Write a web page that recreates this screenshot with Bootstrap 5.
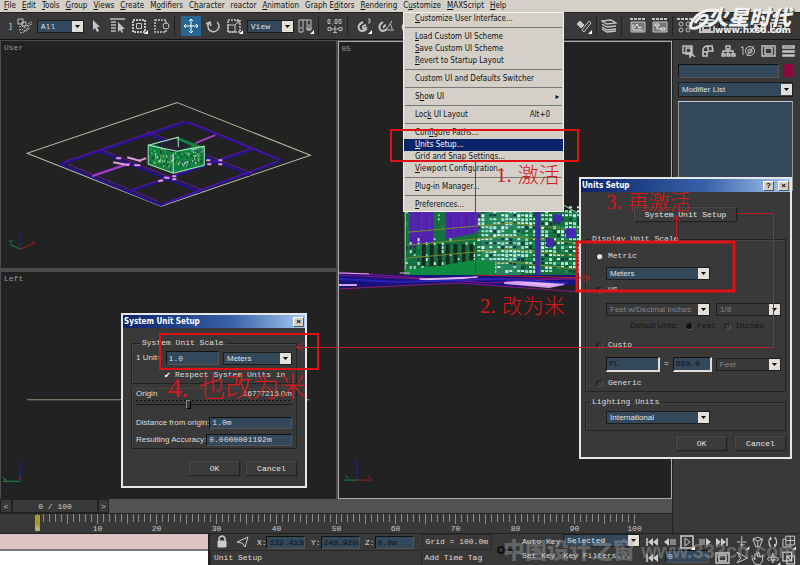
<!DOCTYPE html>
<html lang="en">
<head>
<meta charset="utf-8">
<meta name="viewport" content="width=device-width, initial-scale=1">
<title>Units Setup</title>
<link href="https://cdn.jsdelivr.net/npm/bootstrap@5.3.0/dist/css/bootstrap.min.css" rel="stylesheet">
<style>
:root{--ui:"DejaVu Sans Condensed","DejaVu Sans",sans-serif;--mono:"Liberation Mono","Noto Sans CJK SC",monospace;--arial:"Liberation Sans",Arial,sans-serif;--blue:#34485c;--panel:#393939;--dark:#222}
body{background:var(--panel);color:#ddd;font:8px/12px var(--mono);overflow:hidden}
button,input,select{font:inherit;color:inherit;border-radius:0;padding:0;margin:0}
svg{display:block}
.menubar{background:#d4d0c8;height:12px;font-family:var(--ui);gap:6px;padding-left:4px}
.menubar button,.menu-item{background:none;border:0;color:#111;line-height:12px;white-space:nowrap}
.toolbar-main{height:28px;gap:2px;border-top:1px solid #222;border-bottom:1px solid #111;padding:0 12px 0 8px}
.tool{width:20px;height:20px;background:none;border:0;color:#c4c4c4;display:flex;align-items:center;justify-content:center;flex:none}
.tool svg,.ico svg{width:16px;height:16px;fill:none;stroke:currentColor}
.ico{color:#ccc}
.flip{transform:scaleX(-1)}
.tool.on{background:#266794;color:#fff}
.vr-dark{width:1px;height:20px;background:#222;flex:none}
.pick{appearance:none;border:1px solid #1c1c1c;background:var(--blue) url("data:image/svg+xml,%3Csvg xmlns='http://www.w3.org/2000/svg' width='11' height='11'%3E%3Cpath fill='%23e4e0d8' d='M0 0h11v11H0z'/%3E%3Cpath d='M3 4h5L5.5 7z'/%3E%3C/svg%3E") no-repeat right center;color:#dde4ea;padding-left:3px;height:13px;line-height:11px;font-family:var(--arial);flex:none}
.pick:disabled{background-color:var(--panel);color:#858585;opacity:1}
.pick.mono{font-family:var(--mono)}
.toolbar-main .pick{width:47px;font-family:var(--mono)}
.viewports{display:grid;grid-template-columns:1fr 1fr;grid-template-rows:227fr 228fr;gap:4px 2px;background:#4c4c4c;padding:1px 0 0 1px}
.view{background:var(--dark);position:relative;overflow:hidden;min-height:0;min-width:0}
.view svg{width:100%;height:100%;position:absolute;inset:0}
.view-name{position:absolute;left:3px;top:1px;color:#999}
.view.camera{grid-row:1/3;grid-column:2;border:1px solid #aaa}
.side{width:128px;border-left:1px solid #222;padding:2px 7px 2px 5px;flex:none}
.side .tool{height:18px}
.field{background:var(--blue);border:1px solid #111;border-right-color:#555;border-bottom-color:#555;min-width:0;padding-left:2px}
.swatch{width:11px;height:13px;background:#8b0a3e;border:0}
.stack{height:90px;border:1px solid #999;border-top-color:#ccc;background:var(--blue)}
.slider-row{height:14px;background:#525252}
.slider-row button{background:var(--panel);border:1px solid #222;color:#ccc;line-height:11px}
.ruler{height:20px;border-top:1px solid #222}
.status{height:32px;border-top:1px solid #222}
.status .field{width:39px;height:13px;color:#111}
.status .frame{width:44px;color:#ddd}
.listener{width:210px;flex:none;border-right:2px solid #222}
.cell{border:1px solid #292929;height:16px;line-height:14px;padding:0 3px;white-space:nowrap}
.flat{background:none;border:0;color:#ddd;text-align:left;white-space:nowrap}
.menu-pop{position:absolute;left:403px;top:12px;width:161px;background:#d4d0c8;border:1px solid #f3f1ec;font-family:var(--ui);z-index:3}
.menu-item{display:flex;justify-content:space-between;width:100%;padding:0 13px 0 11px;text-align:left}
.menu-item.on{background:#0a246a;color:#fff}
.menu-pop hr{margin:2px 1px 3px;border-top:1px solid #777;opacity:1}
.win{position:absolute;background:var(--panel);border:2px solid #e6e6e6;z-index:4}
.units{left:579px;top:177px;width:213px}
.sysunit{left:121px;top:313px;width:186px}
.win-title{height:13px;background:linear-gradient(90deg,#0a246a,#3a62a8 60%,#a6caf0);font:bold 8px/13px var(--ui);color:#fff;padding:0 1px 0 1px}
.win-title button{width:11px;height:10px;background:#d4d0c8;border:1px solid #555;border-top-color:#fff;border-left-color:#fff;color:#000;font:bold 8px/8px var(--arial)}
.group-box{border:1px solid #232323;box-shadow:inset 1px 1px #444;padding:6px 8px 2px 12px;margin:0;min-width:0}
.group-box legend{float:none;width:auto;font:8px/10px var(--mono);padding:0 2px;margin:0 0 0 -8px;color:#ddd}
.group-box.lights{padding-top:4px;padding-bottom:7px}
.line{display:flex;align-items:center;height:12px;white-space:nowrap}
.t4{margin-top:5px}.t7{margin-top:7px}
.g6{gap:6px}
.wide{width:104px}.narrow{width:65px}
.arial{font-family:var(--arial)}
.off{color:#151515}
.radio{appearance:none;width:7px;height:7px;border-radius:50%;border:1px solid #1c1c1c;border-right-color:#555;border-bottom-color:#555;margin:0 5px 0 -10px;flex:none}
.radio.in{margin:0 4px 0 0}
.radio:checked{background:#eee}
.radio:disabled:checked{background:#111}
.push{background:#3b3b3b;border:1px solid #222;border-top-color:#4a4a4a;border-left-color:#4a4a4a;box-shadow:0 0 0 1px #333;color:#e4e4e4;height:15px;width:51px;line-height:12px}
.push.long{width:103px}
.field.lit{border:1px solid #111;border-right:2px solid #ddd;border-bottom:2px solid #ddd;height:15px;color:#111;flex:none}
.tick{appearance:none;width:7px;height:7px;position:relative}
.tick::after{content:"✔";font:8px/7px "DejaVu Sans",sans-serif;color:#fff;display:block}
.range{appearance:none;background:repeating-linear-gradient(90deg,#111 0 2px,transparent 2px 4px) 0 0/100% 1px no-repeat,linear-gradient(#171717,#171717) 0 4px/100% 1px no-repeat;height:9px;width:100%;display:block}
.range::-webkit-slider-thumb{appearance:none;width:5px;height:9px;background:#3a3a3a;border:1px solid #888;border-right-color:#000;border-bottom-color:#000}
.marks{position:absolute;left:0;top:0;z-index:5;pointer-events:none}
.note{position:absolute;z-index:6;display:flex;gap:6px;color:#d3191c;font:300 21px/24px "Liberation Serif","Noto Sans CJK SC",serif;pointer-events:none;white-space:nowrap}
.note.big{font-size:27px;gap:10px}
.n1{left:496px;top:163px}.n2{left:480px;top:294px}.n3{left:606px;top:190px}.n4{left:168px;top:376px}
.brand{position:absolute;z-index:6;right:9px;top:9px;color:#f2f2f2;font:italic 900 21px/18px "Liberation Sans","Noto Sans CJK SC",sans-serif;text-align:right;pointer-events:none;text-shadow:1px 1px 1px #333}
.brand span{display:block;font:bold 9px/6px "DejaVu Sans",sans-serif}
.brand svg{position:absolute;left:-20px;top:-1px}
.watermark{position:absolute;z-index:6;right:4px;bottom:2px;color:#aaa;opacity:.4;font:900 22px/24px "Liberation Sans","Noto Sans CJK SC",sans-serif;pointer-events:none;white-space:nowrap}
.watermark small{font-size:20px;font-weight:700}
</style>
<script src="https://cdn.jsdelivr.net/npm/bootstrap@5.3.0/dist/js/bootstrap.bundle.min.js"></script>
</head>
<body class="vh-100 d-flex flex-column position-relative">

<svg width="0" height="0" class="position-absolute">
<symbol id="i-link" viewBox="0 0 16 16"><path d="M1 1h5v5H1zM5 4h4v4H5z"/><path d="M2 9l3-1 2 2 3-2 2-3 3-1M2 12l3-1 2 2 4-3 1-3 3-1M3 15l4-1 4-2 2-3" stroke-dasharray="2 1"/></symbol>
<symbol id="i-arrow" viewBox="0 0 16 16"><path d="M5 2v10l2-2 2 4 2-1-2-4h3z" fill="currentColor" stroke="none"/></symbol>
<symbol id="i-byname" viewBox="0 0 16 16"><path d="M0 1h15M1 4h5M1 7h5M1 10h5M1 13h5" stroke-width="2" stroke-opacity=".7"/><path d="M8 4v10l2-2 2 3 1-1-1-3h3z" fill="currentColor" stroke="none"/></symbol>
<symbol id="i-rect" viewBox="0 0 16 16"><path d="M1 2h12v12H1z" stroke-width="2" stroke-dasharray="2 1"/><path d="M4.500 5.500h5v5h-5z"/><path d="M16 12v4h-4z" fill="#fff" stroke="none"/></symbol>
<symbol id="i-window" viewBox="0 0 16 16"><path d="M1 2h11v12H1z" stroke-width="1.5" stroke-dasharray="2 1"/><circle cx="12" cy="8" r="3" fill="#393939"/></symbol>
<symbol id="i-move" viewBox="0 0 16 16"><path d="M8 1v14M1 8h14M6 3l2-2 2 2M6 13l2 2 2-2M3 6L1 8l2 2M13 6l2 2-2 2"/></symbol>
<symbol id="i-rotate" viewBox="0 0 16 16"><path d="M4 5a5.500 5.500 0 1 0 8-1M1 6l4-2 1 4" stroke-width="1.500"/></symbol>
<symbol id="i-scale" viewBox="0 0 16 16"><path d="M1 2h12v12H1z" stroke-dasharray="2 1" stroke-width="1.500"/><path d="M1 7h7v7H1zM8 7l4-4M9 3h3v3"/><path d="M16 12v4h-4z" fill="#fff" stroke="none"/></symbol>
<symbol id="i-pivot" viewBox="0 0 16 16"><path d="M1 2h4v12H1zM9 2h4v10H9zM5 2h4"/><path d="M11 6v6M9 10l2 2 2-2M2 10h2"/><path d="M16 12v4h-4z" fill="#fff" stroke="none"/></symbol>
<symbol id="i-spin" viewBox="0 0 16 16"><path d="M1 1.500h2v4H1zM5 6h1M8 1.500h2v4H8zM12 1.500h2v4h-2zM1 9.500h3v3H1zM4 11h8M12 9.500h3v3h-3zM8 8v6M6 14.500h4" stroke-width=".9"/></symbol>
<symbol id="i-magnet" viewBox="0 0 16 16"><path d="M7 4Q1 7 3 11t8 0M10 7q-4 1-3 3t4-1" stroke-width="2"/><path d="M12 1h2v4h-2M12 3h2" stroke-width=".8"/><path d="M16 12v4h-4z" fill="#fff" stroke="none"/></symbol>
<symbol id="i-angle" viewBox="0 0 16 16"><path d="M5 4Q0 7 2 11t7 0M8 7q-3 1-2 3" stroke-width="2"/><path d="M8 12l6-9M9 12h7M12 6q2 2 2 5"/></symbol>
<symbol id="i-erase" viewBox="0 0 16 16"><path d="M1 6l3-3 4 4-3 3z" fill="currentColor"/><path d="M6 12l7-9 2 2-7 9z"/><path d="M16 12v4h-4z" fill="#fff" stroke="none"/></symbol>
<symbol id="i-layers" viewBox="0 0 16 16"><path d="M1 3l9-1 5 3-9 1zM1 6l5 3 9-1M1 9l5 3 9-1M1 11l5 3 9-1" stroke-width="1.400"/></symbol>
<symbol id="i-curve" viewBox="0 0 16 16"><path d="M0 1h16" stroke-width="2" stroke-dasharray="3 1"/><path d="M1 4h14v10H1z" fill="#777"/><path d="M3 6v6h10M4 10l3-4 2 4 3-1" stroke="#eee"/></symbol>
<symbol id="i-schem" viewBox="0 0 16 16"><path d="M0 1h16" stroke-width="2" stroke-dasharray="3 1"/><path d="M1 4h14v10H1z" fill="#777"/><path d="M3 6h4v2H3zM9 10h4v2H9zM5 8v3h4" stroke="#eee"/></symbol>
<symbol id="i-mat" viewBox="0 0 16 16"><path d="M0 1h16" stroke-width="2" stroke-dasharray="3 1"/><circle cx="4" cy="6" r="2"/><circle cx="11" cy="6" r="2"/><circle cx="4" cy="12" r="2"/><circle cx="11" cy="12" r="2"/></symbol>
<symbol id="i-render" viewBox="0 0 16 16"><path d="M1 2h14M1 5h14v9H1zM4 8h7v4H4z" stroke-width="2"/></symbol>
<symbol id="t-create" viewBox="0 0 16 16"><path d="M3 3h9v7H3zM6 5h5v6H6zM10 9l5 5M10 9v5l2-2" stroke-width="1.400"/></symbol>
<symbol id="t-modify" viewBox="0 0 16 16"><path d="M3 13V8q0-5 5-5h4l1 5H9q-2 0-2 2v3zM8 3v4M3 9h4" stroke-width="1.600"/></symbol>
<symbol id="t-hier" viewBox="0 0 16 16"><path d="M6 3h4v3H6zM2 11h3v2H2zM7 11h3v2H7zM12 11h3v2h-3zM8 6v5M3 11V8h10v3" stroke-width="1.400"/></symbol>
<symbol id="t-motion" viewBox="0 0 16 16"><circle cx="10" cy="8" r="4.500"/><circle cx="10" cy="8" r="2"/><path d="M14 3L7 13M3 4v8M1 5l2-2"/></symbol>
<symbol id="t-display" viewBox="0 0 16 16"><path d="M2 3h13v10H2zM5 5h7v6H5z" stroke-width="1.400"/></symbol>
<symbol id="t-util" viewBox="0 0 16 16"><path d="M3 3h11v2H3zM3 8h11v1H3zM3 12h11v1H3z" stroke-width="1.600"/></symbol>
<symbol id="p-start" viewBox="0 0 16 16"><path d="M3 4v8" stroke-width="1.500"/><path d="M9 4v8L4 8zM14 4v8L9 8z" fill="currentColor" stroke="none"/></symbol>
<symbol id="p-prev" viewBox="0 0 16 16"><path d="M7 4v8L2 8z" fill="currentColor" stroke="none"/><path d="M9 5v6M11 5v6M13 5v6"/></symbol>
<symbol id="p-play" viewBox="0 0 16 16"><path d="M2 2h12v12H2z" stroke-width="1.500"/><path d="M6 4v8l5-4z"/><path d="M16 12v4h-4z" fill="#fff" stroke="none"/></symbol>
<symbol id="n-a" viewBox="0 0 16 16"><path d="M8 2v5M3 8h10M8 9v5M6 11h5"/><path d="M16 12v4h-4z" fill="#fff" stroke="none"/></symbol>
<symbol id="n-b" viewBox="0 0 16 16"><path d="M3 5l5-2 5 2-5 2zM3 5l3 8h4l3-8M8 7v6"/></symbol>
<symbol id="n-c" viewBox="0 0 16 16"><path d="M6 3Q2 8 6 13M10 3q4 5 0 10M6 3v3M10 13v-3" stroke-width="1.300"/></symbol>
<symbol id="n-d" viewBox="0 0 16 16"><path d="M5 2h9v9H5zM9.500 2v9M5 6.500h9M5 5H2v8h8v-2"/><path d="M16 12v4h-4z" fill="#fff" stroke="none"/></symbol>
<symbol id="n-e" viewBox="0 0 16 16"><path d="M3 2l11 6-11 5M3 2l4 6-4 5"/></symbol>
<symbol id="n-f" viewBox="0 0 16 16"><path d="M5 14L2 9l2-1 1 2V4l2-1 1 4V2l2 1v4l3-2v6l-3 4z"/></symbol>
<symbol id="n-g" viewBox="0 0 16 16"><path d="M4 11Q0 7 8 7t5 4M8 3q-3 5 0 10 3-5 0-10M5 10h7"/><path d="M16 12v4h-4z" fill="#fff" stroke="none"/></symbol>
<symbol id="n-h" viewBox="0 0 16 16"><path d="M2 2h9v9H2zM6 6h8v8H6zM6 6l5 5M8 11h3V8" stroke-width="1.300"/></symbol>
</svg>

<nav class="menubar d-flex flex-shrink-0" aria-label="Main menu">
<button><u>F</u>ile</button><button><u>E</u>dit</button><button><u>T</u>ools</button><button><u>G</u>roup</button><button><u>V</u>iews</button><button><u>C</u>reate</button><button>M<u>o</u>difiers</button><button>C<u>h</u>aracter</button><button>reactor</button><button><u>A</u>nimation</button><button>Graph E<u>d</u>itors</button><button><u>R</u>endering</button><button aria-expanded="true">C<u>u</u>stomize</button><button><u>M</u>AXScript</button><button><u>H</u>elp</button>
</nav>

<div class="toolbar-main d-flex align-items-center flex-shrink-0" role="toolbar" aria-label="Main toolbar">
<span>]</span>
<button class="tool" aria-label="Bind"><svg><use href="#i-link"/></svg></button>
<select class="pick" aria-label="Selection filter"><option>All</option></select>
<button class="tool" aria-label="Select"><svg><use href="#i-arrow"/></svg></button>
<button class="tool" aria-label="Select by name"><svg><use href="#i-byname"/></svg></button>
<button class="tool" aria-label="Region"><svg><use href="#i-rect"/></svg></button>
<button class="tool" aria-label="Crossing"><svg><use href="#i-window"/></svg></button>
<span class="vr-dark me-1"></span>
<button class="tool on" aria-label="Move"><svg><use href="#i-move"/></svg></button>
<button class="tool" aria-label="Rotate"><svg><use href="#i-rotate"/></svg></button>
<button class="tool" aria-label="Scale"><svg><use href="#i-scale"/></svg></button>
<select class="pick" aria-label="Coordinate system"><option>View</option></select>
<button class="tool" aria-label="Pivot"><svg><use href="#i-pivot"/></svg></button>
<span class="vr-dark me-1"></span>
<button class="tool" aria-label="Manipulate"><svg><use href="#i-spin"/></svg></button>
<span class="vr-dark me-1"></span>
<button class="tool" aria-label="Snap"><svg><use href="#i-magnet"/></svg></button>
<button class="tool" aria-label="Angle snap"><svg><use href="#i-angle"/></svg></button>
<button class="tool" aria-label="Percent snap"><svg><use href="#i-magnet"/></svg></button>
<button class="tool ms-auto" aria-label="Align"><svg><use href="#i-erase"/></svg></button>
<span class="vr-dark"></span>
<button class="tool" aria-label="Layers"><svg><use href="#i-layers"/></svg></button>
<span class="vr-dark me-1"></span>
<button class="tool" aria-label="Curve editor"><svg><use href="#i-curve"/></svg></button>
<button class="tool" aria-label="Schematic view"><svg><use href="#i-schem"/></svg></button>
<span class="vr-dark"></span>
<button class="tool" aria-label="Materials"><svg><use href="#i-mat"/></svg></button>
<button class="tool" aria-label="Render scene"><svg><use href="#i-render"/></svg></button>
<select class="pick" aria-label="Render type"><option>View</option></select>
<button class="tool" aria-label="Quick render"><svg><use href="#i-render"/></svg></button>
</div>

<main class="d-flex flex-grow-1" style="min-height:0">
<div class="d-flex flex-column flex-grow-1">
<div class="viewports flex-grow-1">
<section class="view">
<svg viewBox="1 41 334 226" preserveAspectRatio="xMinYMin meet" fill="none">
<path d="M177 102.500L310 155 161 206 27 153z" stroke="#b9bd9c"/>
<g stroke="#2410a0" stroke-width="2"><path d="M60 164l126-42M92 176l36-12M130 191l120-41M60 164l101 41M98 151l60 24 42 17M145 133l105 42M186 122l94 38M160 205l120-44"/></g>
<g stroke="#7016b8" stroke-width=".8"><path d="M63 162l121-41M94 174l30-10M133 189l118-41M100 149l60 24 43 17M147 131l105 42M189 122l90 37M165 203l112-42M68 164l90 37"/></g>
<g stroke="#dc9be0" stroke-width="2"><path d="M92 176l38-13M195 143l20-8" stroke="#a040c0"/><path d="M113 162l16 3M127 157l14 4M116 158h5M134 165h6M158 181l5-1M164 177l5 1M172 179h4M172 176h4M206 160h4M207 164h4M218 160h4M218 164h4M138 161l8-3"/></g>
<path d="M148 145l30-8 26 10v19l-31 7-25-9z" fill="#12833f"/>
<path d="M154 144l20-6 18 8-20 6z" fill="#223"/>
<g id="house"></g>
<path d="M148 145v19l25 9 31-8v-19l-27 5zM173 153v20M148 145l30-8v10" stroke="#a6e8c0"/>
<g stroke-width="1"><path d="M20 249V229" stroke="#22227a"/><path d="M20 249l14-6M32 241l3 3" stroke="#8a1f1f"/><path d="M20 249l-10-5M9 240l2 2 2-2" stroke="#1c7a4a"/></g>
</svg><span class="view-name">User</span></section>
<section class="view camera">
<svg viewBox="339 41 332 458" preserveAspectRatio="xMinYMin meet" fill="none">
<path d="M405 205l115-3 59 10v63H405z" fill="#17703f"/>
<g id="tower"></g>
<path d="M405 270l35-4 34-6 22 2v13h-91z" fill="#0f8a42"/>
<path d="M339 273l70 2h170v10l-60 2-80-4-100 5z" fill="#17127c"/>
<path d="M339 275l80 4h160M339 289l120-6 120 9M339 272l150 11 90-5" stroke="#8d1787"/>
<path d="M339 273l30 1M400 273h10M420 279l58-2-40 4z" stroke="#e5b9ee" fill="#e5b9ee"/><path d="M339 285h18M505 283l45 4 15-3-30-3z" stroke="#d9a0ec" stroke-width="2" fill="#e8b8f4"/><path d="M339 279l60 3 100-3 70 4" stroke="#2b22b4" stroke-width="2"/>
<path d="M357 481v-20" stroke="#2222a0"/><path d="M357 481h14M368 477l4 4" stroke="#9a2222"/><path d="M357 481h-13M345 476l3 3" stroke="#1c8a4a"/>
</svg><span class="view-name">05</span></section>
<section class="view">
<svg viewBox="1 271 334 227" preserveAspectRatio="xMinYMin meet" fill="none"><path d="M27 398.500h282" stroke="#8f9477"/><path d="M20 480v-20" stroke="#2222a0"/><path d="M3 480h17M3 476l3 3" stroke="#1c8a4a"/><path d="M19 476l3 3" stroke="#9a2222"/></svg>
<span class="view-name">Left</span></section>
</div>
<div class="slider-row d-flex"><button style="width:12px" aria-label="Previous frame">&lt;</button><button style="width:86px">0 / 100</button><button style="width:11px" aria-label="Next frame">&gt;</button></div>
<div class="ruler"><svg id="ticks" width="672" height="19" stroke="#8a8a8a"></svg></div>
</div>
<aside class="side d-flex flex-column">
<div class="d-flex justify-content-between mb-1"><button class="tool" aria-label="Create"><svg><use href="#t-create"/></svg></button><button class="tool" aria-label="Modify"><svg><use href="#t-modify"/></svg></button><button class="tool" aria-label="Hierarchy"><svg><use href="#t-hier"/></svg></button><button class="tool" aria-label="Motion"><svg><use href="#t-motion"/></svg></button><button class="tool" aria-label="Display"><svg><use href="#t-display"/></svg></button><button class="tool" aria-label="Utilities"><svg><use href="#t-util"/></svg></button></div>
<div class="d-flex gap-1 mb-1"><input class="field flex-grow-1" aria-label="Object name"><button class="swatch" aria-label="Object colour"></button></div>
<select class="pick mb-1" style="height:15px" aria-label="Modifier list"><option>Modifier List</option></select>
<div class="stack"></div>
</aside>
</main>

<footer class="status d-flex flex-shrink-0">
<div class="listener d-flex flex-column"><div class="flex-fill" style="background:#dcc4c5;border-bottom:2px solid #777"></div><div class="flex-fill bg-white"></div></div>
<div class="flex-grow-1">
<div class="d-flex align-items-center justify-content-between ps-1 pe-2" style="height:16px">
<span class="ico"><svg viewBox="0 0 16 16"><path d="M5 7V4q3-4 6 0v3" stroke-width="1.500"/><path d="M4 7h8v6H4z" fill="#ccc"/></svg></span>
<span class="ico"><svg viewBox="0 0 16 16"><path d="M2 8l11-5-3 10-3-4z"/></svg></span>
<label>X:<input class="field" value="132.413m"></label><label>Y:<input class="field" value="240.928m"></label><label>Z:<input class="field" value="0.0m"></label></div>
<div class="cell">Unit Setup</div>
</div>
<div><div class="cell">Grid = 100.0m</div><button class="cell flat d-block w-100">Add Time Tag</button></div>
<svg width="30" height="30" viewBox="0 0 30 30" class="flex-shrink-0" fill="none" stroke="#111" stroke-width="2"><circle cx="9" cy="16" r="3"/><path d="M12 16h9v3"/></svg>
<div class="flex-shrink-0" style="width:118px"><div class="d-flex justify-content-between" style="height:16px"><button class="flat">Auto Key</button><select class="pick mono" style="width:77px" aria-label="Key set"><option>Selected</option></select></div><div class="d-flex gap-2"><button class="flat">Set Key</button><button class="flat">Key Filters...</button></div></div>
<div class="flex-shrink-0 ms-1" style="width:86px"><div class="d-flex justify-content-between ico"><svg><use href="#p-start"/></svg><svg><use href="#p-prev"/></svg><svg><use href="#p-play"/></svg><svg class="flip"><use href="#p-prev"/></svg><svg class="flip"><use href="#p-start"/></svg></div><div class="d-flex justify-content-between ico"><svg><use href="#p-start"/></svg><input class="field frame" value="0" aria-label="Frame"><svg><use href="#t-display"/></svg></div></div>
<div class="flex-shrink-0 ico ps-1 pe-1" style="width:70px"><div class="d-flex justify-content-between"><svg><use href="#n-a"/></svg><svg><use href="#n-b"/></svg><svg><use href="#n-c"/></svg><svg><use href="#n-d"/></svg></div><div class="d-flex justify-content-between"><svg><use href="#n-e"/></svg><svg><use href="#n-f"/></svg><svg><use href="#n-g"/></svg><svg><use href="#n-h"/></svg></div></div>
</footer>

<div class="menu-pop" role="menu">
<button class="menu-item" role="menuitem"><span><u>C</u>ustomize User Interface...</span></button><hr>
<button class="menu-item" role="menuitem"><span><u>L</u>oad Custom UI Scheme</span></button>
<button class="menu-item" role="menuitem"><span><u>S</u>ave Custom UI Scheme</span></button>
<button class="menu-item" role="menuitem"><span><u>R</u>evert to Startup Layout</span></button><hr>
<button class="menu-item" role="menuitem"><span>Custom UI and Defaults Switcher</span></button><hr>
<button class="menu-item pe-1" role="menuitem"><span>S<u>h</u>ow UI</span><span>▸</span></button><hr>
<button class="menu-item" role="menuitem"><span>Loc<u>k</u> UI Layout</span><span>Alt+0</span></button><hr>
<button class="menu-item" role="menuitem"><span>Con<u>f</u>igure Paths...</span></button>
<button class="menu-item on" role="menuitem"><span><u>U</u>nits Setup...</span></button>
<button class="menu-item" role="menuitem"><span><u>G</u>rid and Snap Settings...</span></button>
<button class="menu-item" role="menuitem"><span><u>V</u>iewport Configuration...</span></button><hr>
<button class="menu-item" role="menuitem"><span><u>P</u>lug-in Manager...</span></button><hr>
<button class="menu-item" role="menuitem"><span><u>P</u>references...</span></button>
</div>

<section class="win units" role="dialog" aria-label="Units Setup">
<div class="win-title d-flex align-items-center"><span class="me-auto">Units Setup</span><button>?</button><button class="ms-1" aria-label="Close">×</button></div>
<div class="px-1" style="padding-bottom:6px">
<div class="text-center" style="padding:15px 0 12px"><button class="push long">System Unit Setup</button></div>
<fieldset class="group-box"><legend>Display Unit Scale</legend>
<div class="ps-2">
<div class="line"><input class="radio" type="radio" name="scale" id="metric" checked><label for="metric">Metric</label></div>
<div class="line t4"><select class="pick wide" aria-label="Metric unit"><option>Meters</option></select></div>
<div class="line t4"><input class="radio" type="radio" name="scale" id="us"><label for="us">US</label></div>
<div class="line t7 g6"><select class="pick wide" disabled aria-label="US unit"><option>Feet w/Decimal Inches</option></select><select class="pick narrow" disabled aria-label="Fraction"><option>1/8</option></select></div>
<div class="line t4 off ps-4"><span class="arial me-2">Default Units:</span><input class="radio in" type="radio" name="def" id="ft" checked disabled><label for="ft" class="me-2">Feet</label><input class="radio in" type="radio" name="def" id="inch" disabled><label for="inch">Inches</label></div>
<div class="line t7"><input class="radio" type="radio" name="scale" id="custo"><label for="custo">Custo</label></div>
<div class="line t7 gap-1"><input class="field lit" style="width:54px" value="FL" aria-label="Custom name"><span>=</span><input class="field lit" style="width:39px" value="660.0" aria-label="Custom value"><select class="pick narrow" disabled aria-label="Custom unit"><option>Feet</option></select></div>
<div class="line t7"><input class="radio" type="radio" name="scale" id="generic"><label for="generic">Generic</label></div>
</div></fieldset>
<fieldset class="group-box lights t4"><legend>Lighting Units</legend><div class="ps-2"><div class="line"><select class="pick wide" aria-label="Lighting units"><option>International</option></select></div></div></fieldset>
<div class="d-flex justify-content-end gap-2 t4"><button class="push">OK</button><button class="push">Cancel</button></div>
</div></section>

<section class="win sysunit" role="dialog" aria-label="System Unit Setup">
<div class="win-title d-flex align-items-center"><span class="me-auto">System Unit Setup</span><button aria-label="Close">×</button></div>
<div style="padding:10px 8px">
<fieldset class="group-box px-1 pt-1"><legend class="ms-1">System Unit Scale</legend>
<div class="line gap-1"><label for="one" class="arial">1 Unit=</label><input id="one" class="field flex-grow-1" value="1.0" style="width:40px;height:14px"><select class="pick" style="width:69px" aria-label="System unit"><option>Meters</option></select></div>
<div class="line t4" style="padding-left:28px"><input class="tick me-1" type="checkbox" id="resp" checked><label for="resp">Respect System Units in</label></div>
</fieldset>
<div class="group-box border-top-0 px-1 pt-0 arial">
<div class="line justify-content-between mt-1"><span>Origin</span><span>16777215.0m</span></div>
<input class="range" type="range" value="33" aria-label="Origin">
<div class="line justify-content-between mt-2"><label for="dist">Distance from origin:</label><input id="dist" class="field" style="width:88px;height:12px;font-family:var(--mono)" value="1.0m"></div>
<div class="line justify-content-between t4"><label for="acc">Resulting Accuracy:</label><input id="acc" class="field" style="width:88px;height:12px;font-family:var(--mono)" value="0.0000001192m"></div>
</div>
<div class="d-flex justify-content-end g6" style="padding-top:12px"><button class="push">OK</button><button class="push">Cancel</button></div>
</div></section>

<svg class="marks" width="800" height="565" fill="none" stroke="#df1114">
<path d="M391 130h187v31H391zM160 334h158v35H160z" stroke-width="2"/><path d="M577 242h157v49H577z" stroke-width="3"/>
<path d="M475.500 161v114L590 278M582 274l8 4-8 4M676.500 240v-24M672 222l4-7 4 7M738 213.500h35.500V347.500H297M304 343l-8 4 8 4" stroke="#b82022"/>
</svg>
<div class="note n1"><span>1.</span><span>激活</span></div>
<div class="note n2"><span>2.</span><span>改为米</span></div>
<div class="note n3"><span>3.</span><span>再激活</span></div>
<div class="note big n4"><span>4.</span><span>也改为米</span></div>
<div class="brand"><svg width="34" height="24" fill="none" stroke="#f2f2f2" stroke-width="3"><path d="M32 3Q16-1 6 12 0 22 9 20 22 15 20 8 15 5 8 15"/></svg>火星时代<span>www.hxsd.com</span></div>
<div class="watermark">中国设计之窗 <small>www.333cn.com</small></div>

<script>
const NS='http://www.w3.org/2000/svg';
function add(p,n,a,t){const e=document.createElementNS(NS,n);for(const k in a)e.setAttribute(k,a[k]);if(t)e.textContent=t;p.appendChild(e)}
// time ruler
const r=document.getElementById('ticks');
add(r,'rect',{x:35,y:1,width:5,height:16,fill:'#a89f2c',stroke:'none'});
for(let i=0;i<=100;i++){const x=Math.round(37+i*5.97)+.5;add(r,'path',{d:`M${x} 0v${i%5?8:10}`});
 if(i%10==0)add(r,'text',{x,y:17,fill:'#ccc',stroke:'none','text-anchor':'middle'},String(i))}
// facade details, seeded so every load draws the same
let s=7;const rnd=()=>(s=(s*16807)%2147483647)/2147483647;
const t=document.getElementById('tower');
add(t,'path',{d:'M410 205h24v37l-24 5zM446 205h34v27l-34 7z',fill:'#5420b0'});
add(t,'path',{d:'M482 205h40v70h-40z',fill:'#2b8060'});
for(let x=406;x<579;x+=4)for(let y=206;y<274;y+=4){
 const right=x>476,p=rnd();if(!right&&y<236&&!(x<410||(x>434&&x<444)))continue;
 if(p<(right?.9:.5))add(t,'rect',{x,y,width:right?3:2,height:p<.4?3:2,fill:['#b5eedc','#94d9c8','#1d3550','#d6f5e2','#11994c','#a8e6d8'][Math.floor(rnd()*6)]})}
for(let x=414;x<480;x+=8)add(t,'path',{d:`M${x} 205v32`,stroke:'#27603f'});
for(let x=424;x<476;x+=8)add(t,'path',{d:`M${x} 244v22`,stroke:'#162a22','stroke-width':4});
for(let y=226;y<272;y+=13)add(t,'path',{d:`M408 ${y+6}L510 ${y-3} 578 ${y+4}`,stroke:'#7b8a2c'});
add(t,'path',{d:'M536 205h5v70h-5zM554 214h9v8h-9zM567 228h10v10h-10zM547 238h8v9h-8z',fill:'#4426b0'});
add(t,'path',{d:'M565 205l14 8M405.500 205v70',stroke:'#aad8a0'});
const h=document.getElementById('house');
for(let i=0;i<190;i++){const x=149+rnd()*54,y=(x<173?147+(x-149)*.35:155-(x-173)*.25)+rnd()*17-3;
 add(h,'rect',{x:Math.round(x),y:Math.round(y),width:1,height:2,fill:['#b9f0d0','#0c8c42','#3a22a0','#6fd69a','#7d9f3a','#1b3330'][Math.floor(rnd()*6)]})}
</script>
</body>
</html>
